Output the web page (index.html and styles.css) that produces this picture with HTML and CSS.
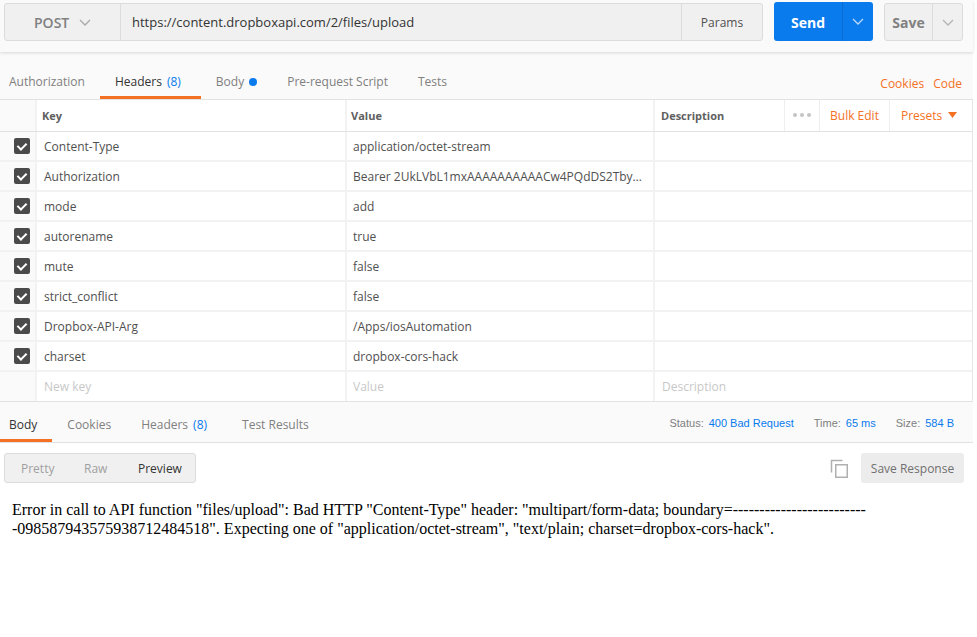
FILE: index.html
```html
<!DOCTYPE html>
<html>
<head>
<meta charset="utf-8">
<link rel="stylesheet" href="styles.css">
</head>
<body>
<div class="app">
  <div class="topbar">
    <div class="urlbox">
      <div class="method"><span>POST</span>
        <svg class="chev" width="12" height="7" viewBox="0 0 12 7"><path d="M1 1l5 5 5-5" fill="none" stroke="#a8a8a8" stroke-width="1.3"/></svg>
      </div>
      <div class="url">https://content.dropboxapi.com/2/files/upload</div>
      <div class="params">Params</div>
    </div>
    <div class="send">
      <div class="send-main">Send</div>
      <div class="send-arrow"><svg width="12" height="7" viewBox="0 0 12 7"><path d="M1 1l5 5 5-5" fill="none" stroke="#bcd9fa" stroke-width="1.3"/></svg></div>
    </div>
    <div class="save">
      <div class="save-main">Save</div>
      <div class="save-arrow"><svg width="12" height="7" viewBox="0 0 12 7"><path d="M1 1l5 5 5-5" fill="none" stroke="#b4b4b4" stroke-width="1.3"/></svg></div>
    </div>
  </div>

  <div class="reqtabs">
    <div class="tabs">
      <div class="tab first">Authorization</div>
      <div class="tab active">Headers <span class="count">(8)</span></div>
      <div class="tab">Body <span class="dot"></span></div>
      <div class="tab">Pre-request Script</div>
      <div class="tab">Tests</div>
    </div>
    <div class="links"><span>Cookies</span><span>Code</span></div>
  </div>

  <div class="table">
    <div class="row head">
      <div class="c-check"></div>
      <div class="c-key">Key</div>
      <div class="c-val">Value</div>
      <div class="c-desc">Description</div>
      <div class="c-dots"><span></span><span></span><span></span></div>
      <div class="c-bulk">Bulk Edit</div>
      <div class="c-presets">Presets <svg width="9" height="6" viewBox="0 0 9 6"><path d="M0 0h9L4.5 6z" fill="#f47023"/></svg></div>
    </div>
    <div class="row"><div class="c-check"><i class="cb"></i></div><div class="c-key">Content-Type</div><div class="c-val">application/octet-stream</div><div class="c-rest"></div></div>
    <div class="row"><div class="c-check"><i class="cb"></i></div><div class="c-key">Authorization</div><div class="c-val">Bearer 2UkLVbL1mxAAAAAAAAAACw4PQdDS2Tby…</div><div class="c-rest"></div></div>
    <div class="row"><div class="c-check"><i class="cb"></i></div><div class="c-key">mode</div><div class="c-val">add</div><div class="c-rest"></div></div>
    <div class="row"><div class="c-check"><i class="cb"></i></div><div class="c-key">autorename</div><div class="c-val">true</div><div class="c-rest"></div></div>
    <div class="row"><div class="c-check"><i class="cb"></i></div><div class="c-key">mute</div><div class="c-val">false</div><div class="c-rest"></div></div>
    <div class="row"><div class="c-check"><i class="cb"></i></div><div class="c-key">strict_conflict</div><div class="c-val">false</div><div class="c-rest"></div></div>
    <div class="row"><div class="c-check"><i class="cb"></i></div><div class="c-key">Dropbox-API-Arg</div><div class="c-val">/Apps/iosAutomation</div><div class="c-rest"></div></div>
    <div class="row"><div class="c-check"><i class="cb"></i></div><div class="c-key">charset</div><div class="c-val">dropbox-cors-hack</div><div class="c-rest"></div></div>
    <div class="row last"><div class="c-check"></div><div class="c-key ph">New key</div><div class="c-val ph">Value</div><div class="c-rest ph">Description</div></div>
  </div>

  <div class="restabs">
    <div class="tabs">
      <div class="tab first active">Body</div>
      <div class="tab">Cookies</div>
      <div class="tab">Headers <span class="count">(8)</span></div>
      <div class="tab">Test Results</div>
    </div>
    <div class="meta"><span class="lbl">Status:</span><span class="v">400 Bad Request</span><span class="lbl">Time:</span><span class="v">65 ms</span><span class="lbl">Size:</span><span class="v">584 B</span></div>
  </div>

  <div class="resbody">
    <div class="toolbar">
      <div class="seg">
        <span>Pretty</span><span>Raw</span><span class="on">Preview</span>
      </div>
      <div class="tools">
        <svg class="copy" width="19" height="19" viewBox="0 0 19 19">
          <path d="M1.5 13.5V1.5h11" fill="none" stroke="#b0b0b0" stroke-width="1.5"/>
          <rect x="5.75" y="5.75" width="11.5" height="12.5" fill="none" stroke="#b0b0b0" stroke-width="1.5"/>
        </svg>
        <div class="saveresp">Save Response</div>
      </div>
    </div>
    <p class="error">Error in call to API function "files/upload": Bad HTTP "Content-Type" header: "multipart/form-data; boundary=-------------------------<wbr>-098587943575938712484518". Expecting one of "application/octet-stream", "text/plain; charset=dropbox-cors-hack".</p>
  </div>
</div>
</body>
</html>
```

FILE: styles.css
```css
* { box-sizing: border-box; }
html, body { margin: 0; padding: 0; background: #fff; }
body { font-family: "Open Sans", "Liberation Sans", sans-serif; font-size: 12px; color: #505050; }

.app { width: 973px; height: 637px; background: #fff; }

.topbar {
  height: 52px;
  background: #fafafa;
  display: flex;
  align-items: flex-start;
  padding: 3px 0 0 4px;
  box-shadow: 0 1px 3px rgba(0,0,0,0.14);
  position: relative;
  z-index: 1;
}
.urlbox {
  width: 759px; height: 38px;
  background: #f0f0f0;
  border: 1px solid #dcdcdc;
  border-radius: 3px;
  display: flex;
}
.method {
  width: 116px; border-right: 1px solid #dcdcdc;
  display: flex; align-items: center; padding-left: 29px; gap: 10px;
  font-size: 14px; font-weight: 600; color: #808080;
}
.url { flex: 1; display: flex; align-items: center; padding-left: 11px; font-size: 13px; color: #333; }
.params { width: 81px; border-left: 1px solid #dcdcdc; display: flex; align-items: center; justify-content: center; font-size: 12px; color: #505050; }

.send {
  margin-left: 11px; margin-top: -1px;
  width: 99px; height: 39px;
  background: #097bed; border-radius: 3px;
  display: flex;
}
.send-main { width: 69px; display: flex; align-items: center; justify-content: center; padding-top: 1px; color: #fff; font-weight: 700; font-size: 14px; border-right: 1px solid #0a6bd0; }
.send-arrow { flex: 1; display: flex; align-items: center; justify-content: center; }

.save {
  margin-left: 11px;
  width: 79px; height: 38px;
  background: #f0f0f0; border: 1px solid #dcdcdc; border-radius: 3px;
  display: flex;
}
.save-main { width: 48px; display: flex; align-items: center; justify-content: center; color: #808080; font-weight: 700; font-size: 14px; border-right: 1px solid #dcdcdc; }
.save-arrow { flex: 1; display: flex; align-items: center; justify-content: center; }

.reqtabs {
  height: 48px;
  background: #fafafa;
  border-bottom: 1px solid #e2e2e2;
  display: flex; justify-content: space-between; align-items: flex-end;
}
.tabs { display: flex; height: 100%; align-items: flex-end; }
.tab {
  padding: 0 15px;
  height: 31px;
  display: flex; align-items: flex-start; padding-top: 5px;
  font-size: 12px; color: #808080;
  border-bottom: 3px solid transparent;
  white-space: nowrap;
}
.tab.first { padding-left: 9px; }
.tab.active { color: #333; border-bottom-color: #f47023; }
.count { color: #097bed; margin-left: 5px; margin-right: 5px; }
.dot { width: 8px; height: 8px; border-radius: 50%; background: #097bed; display: inline-block; margin: 5px 0 0 5px; }
.links { display: flex; gap: 9px; color: #f47023; font-size: 12px; padding: 0 11px 7px 0; }

.table { background: #fff; border-right: 1px solid #e6e6e6; }
.row { display: flex; height: 30px; border-bottom: 2px solid #f2f2f2; }
.row.head { height: 32px; border-bottom: 1px solid #e2e2e2; }
.row.last { border-bottom: 1px solid #e2e2e2; }
.row > div { display: flex; align-items: center; white-space: nowrap; overflow: hidden; }
.c-check { width: 37px; background: #fafafa; border-right: 2px solid #f2f2f2; justify-content: flex-start; padding-left: 6px; }
.c-key { width: 310px; padding-left: 7px; border-right: 2px solid #f2f2f2; color: #505050; }
.c-val { width: 308px; padding-left: 6px; border-right: 2px solid #f2f2f2; color: #505050; }
.c-rest { flex: 1; padding-left: 7px; }
.ph { color: #c8c8c8; }
.head > div { font-size: 11px; font-weight: 700; color: #606060; padding-bottom: 1px; }
.head .c-key { padding-left: 5px; }
.head .c-val { padding-left: 4px; }
.head .c-desc { width: 129px; padding-left: 6px; }
.head .c-dots { width: 36px; justify-content: center; gap: 3px; border-left: 1px solid #eee; border-right: 1px solid #eee; }
.c-dots span { width: 4px; height: 4px; border-radius: 50%; background: #c4c4c4; }
.head .c-bulk { width: 70px; justify-content: center; color: #f47023; font-weight: 400; font-size: 12px; border-right: 1px solid #eee; }
.head .c-presets { flex: 1; padding-left: 11px; gap: 6px; color: #f47023; font-weight: 400; font-size: 12px; }

.cb {
  width: 16px; height: 16px; border-radius: 2px; background: #4a4a4a; display: block; margin-left: 8px;
  position: relative;
}
.cb::after {
  content: ""; position: absolute; left: 5px; top: 3px; width: 4px; height: 7px;
  border: solid #fff; border-width: 0 2px 2px 0; transform: rotate(45deg);
}

.restabs {
  height: 41px; background: #fafafa;
  border-bottom: 1px solid #e2e2e2;
  display: flex; justify-content: space-between; align-items: flex-end;
}
.restabs .tab { height: 38px; padding-top: 12px; }
.meta { align-self: center; font-family: "Liberation Sans", Arial, sans-serif; font-size: 11px; color: #808080; padding-right: 19px; padding-top: 1px; white-space: nowrap; }
.meta .lbl { margin-right: 5px; }
.meta .v { color: #097bed; margin-right: 20px; }
.meta .v:last-child { margin-right: 0; }

.resbody { background: #fff; padding: 10px 9px 0 4px; }
.toolbar { display: flex; justify-content: space-between; align-items: center; }
.seg {
  width: 192px; height: 30px; background: #f0f0f0; border: 1px solid #dcdcdc; border-radius: 3px;
  display: flex; align-items: center; padding-left: 16px; gap: 0;
  font-size: 12px; color: #a0a0a0;
}
.seg span:nth-child(1) { width: 63px; }
.seg span:nth-child(2) { width: 54px; }
.seg .on { color: #333; }
.tools { display: flex; align-items: center; gap: 12px; }
.saveresp {
  width: 103px; height: 30px; background: #ececec; border-radius: 3px;
  display: flex; align-items: center; justify-content: center; font-size: 12px; color: #707070;
}
.error {
  margin: 17px 0 0 8px;
  width: 870px;
  font-family: "Liberation Serif", "Times New Roman", serif;
  font-size: 16px; line-height: 19px; color: #000;
}
```
